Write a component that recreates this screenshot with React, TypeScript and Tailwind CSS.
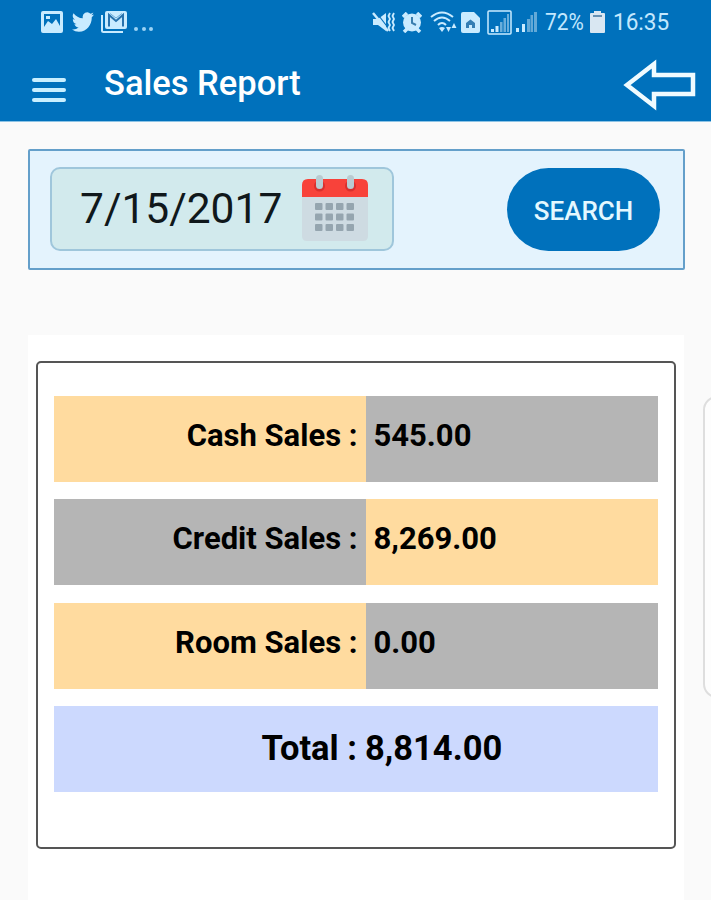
import React from "react";

const ICE = "#c9ebff";

function PictureIcon() {
  return (
    <svg width="22" height="22" viewBox="0 0 22 22">
      <path
        fill={ICE}
        fillRule="evenodd"
        d="M2 0h18a2 2 0 0 1 2 2v18a2 2 0 0 1-2 2H2a2 2 0 0 1-2-2V2a2 2 0 0 1 2-2zM3 3v13l4-6 4 3 4-5 4 7V3zM5 5h4v3H5z"
      />
    </svg>
  );
}

function BirdIcon() {
  return (
    <svg width="22" height="20" viewBox="0 2 24 20" preserveAspectRatio="none">
      <path
        fill={ICE}
        d="M23.95 4.57a10 10 0 0 1-2.82.77 4.96 4.96 0 0 0 2.16-2.72c-.95.55-2 .96-3.13 1.18a4.92 4.92 0 0 0-8.38 4.48C7.69 8.1 4.07 6.13 1.64 3.16a4.92 4.92 0 0 0 1.52 6.57 4.9 4.9 0 0 1-2.23-.61v.06a4.92 4.92 0 0 0 3.95 4.83 5 5 0 0 1-2.21.08 4.94 4.94 0 0 0 4.6 3.42A9.87 9.87 0 0 1 0 19.54a13.99 13.99 0 0 0 7.55 2.21c9.05 0 14-7.5 14-13.98 0-.21 0-.42-.02-.63a9.94 9.94 0 0 0 2.42-2.57z"
      />
    </svg>
  );
}

function MailIcon() {
  return (
    <svg width="26" height="22" viewBox="0 0 26 22" fill="none">
      <path d="M1 4v15.500a1.500 1.500 0 0 0 1.500 1.500H22" stroke={ICE} strokeWidth="2" />
      <rect x="4" y="0" width="22" height="18" rx="2" fill={ICE} />
      <path d="M8 15.500V4l7 6 7-6v11.500" stroke="#2872ad" strokeWidth="2" />
      <path d="M9 2.500l6 4.500 6-4.500" stroke="#6aacda" strokeWidth="1" />
    </svg>
  );
}

function MuteIcon() {
  return (
    <svg width="24" height="22" viewBox="0 0 24 22" fill="none">
      <path d="M1 8h5l8-6v18l-8-6H1z" fill={ICE} />
      <path d="M4 1l13 17" stroke="#0871bc" strokeWidth="1.200" />
      <path d="M1 2l15 18" stroke={ICE} strokeWidth="2.500" />
      <path d="M18 2l-1.500 3 1.500 3-1.500 3 1.500 3-1.500 3 1.500 3M22 2l-1.500 3 1.500 3-1.500 3 1.500 3-1.500 3 1.500 3" stroke={ICE} strokeWidth="1.800" />
    </svg>
  );
}

function AlarmIcon() {
  return (
    <svg width="20" height="21" viewBox="0 0 20 21" fill="none">
      <path d="M1 5l4-4M19 5l-4-4M2 20l4-4M18 20l-4-4" stroke={ICE} strokeWidth="3.500" />
      <circle cx="10" cy="10.500" r="9" fill={ICE} />
      <path d="M10 5v6l4 2" stroke="#397eae" strokeWidth="2" />
    </svg>
  );
}

function WifiIcon() {
  return (
    <svg width="28" height="22" viewBox="0 0 28 22" fill="none" stroke={ICE} strokeWidth="2">
      <path d="M1 6q11-9 22 0M4 10q8-7 16 0M8 14q4-4 8 0" />
      <path d="M9 17q3-2 6 0l-3 4z" fill={ICE} stroke="none" />
      <path d="M16 16h5l-2.500 5zM21.500 17l2.500-5 2.500 5z" fill={ICE} stroke="none" />
    </svg>
  );
}

function SimIcon() {
  return (
    <svg width="19" height="21" viewBox="0 0 19 21" fill="none">
      <path d="M2 0h11l6 6v13a2 2 0 0 1-2 2H2a2 2 0 0 1-2-2V2a2 2 0 0 1 2-2z" fill={ICE} />
      <path d="M5 16v-5l4.500-3.500L14 11v5h-3v-3H8v3z" fill="#347eb4" />
    </svg>
  );
}

function BoxedSignalIcon() {
  return (
    <svg width="25" height="25" viewBox="0 0 25 25" fill="none">
      <rect x="1" y="1" width="23" height="23" rx="1" stroke={ICE} strokeWidth="1.500" />
      <path d="M4 19h3v3H4zM8.500 16h3v6h-3z" fill={ICE} />
      <path d="M13 12h2.500v10H13zM16.500 8H19v14h-2.500zM20 4h2v18h-2z" fill="#69aedb" />
    </svg>
  );
}

function SignalIcon() {
  return (
    <svg width="21" height="20" viewBox="0 0 21 20">
      <path d="M0 16h3v4H0zM6 12h3v8H6z" fill={ICE} />
      <path d="M11 7h3v13h-3zM14.500 3h2.500v17h-2.500zM18 0h3v20h-3z" fill="#63a9d7" />
    </svg>
  );
}

function BatteryIcon() {
  return (
    <svg width="15" height="22" viewBox="0 0 15 22">
      <path d="M4 0h7v2h3a1 1 0 0 1 1 1v18a1 1 0 0 1-1 1H1a1 1 0 0 1-1-1V3a1 1 0 0 1 1-1h3z" fill="#d9e7f2" />
      <path d="M3 4h9v2H3z" fill="#6792b4" />
    </svg>
  );
}

function CalendarIcon() {
  const columns = [16, 26.5, 37, 47.5];
  const rows = [31, 41.5, 52];
  return (
    <svg className="ml-[16px] shrink-0" width="68" height="68" viewBox="0 0 68 68">
      <path d="M1 20h66v41q0 5-5 5H6q-5 0-5-5z" fill="#cedbe2" />
      <path d="M1 22V10q0-6 6-6h54q6 0 6 6v12z" fill="#f8423a" />
      <circle cx="18.500" cy="11" r="5.500" fill="#d92f2d" />
      <circle cx="49.500" cy="11" r="5.500" fill="#d92f2d" />
      <rect x="15" y="0" width="7" height="14" rx="3.500" fill="#b9cbd1" />
      <rect x="46" y="0" width="7" height="14" rx="3.500" fill="#b9cbd1" />
      {rows.map((y) =>
        columns.map((x) => (
          <rect key={`${x}-${y}`} x={x - 2} y={y - 3} width="7.500" height="7" rx="1" fill="#95a5af" />
        )),
      )}
    </svg>
  );
}

const sales = [
  { label: "Cash Sales :", value: "545.00", left: "bg-[#ffdb9f]", right: "bg-[#b5b5b5]" },
  { label: "Credit Sales :", value: "8,269.00", left: "bg-[#b5b5b5]", right: "bg-[#ffdb9f]" },
  { label: "Room Sales :", value: "0.00", left: "bg-[#ffdb9f]", right: "bg-[#b5b5b5]" },
];

export default function App() {
  return (
    <div className="relative flex h-[900px] w-[711px] flex-col overflow-hidden bg-[#fafafa] font-['Roboto',sans-serif] text-black">
      <header className="h-[122px] shrink-0 border-b border-[#8cc3e5] bg-[#0071bc]">
        <div className="flex h-[44px] items-center pl-[41px] pr-[41px] text-[24px] text-[#c3e8fe]">
          <PictureIcon />
          <span className="ml-[9px]"><BirdIcon /></span>
          <span className="ml-[7px]"><MailIcon /></span>
          <span className="ml-[7px] mt-[14px] flex gap-[3.5px]">
            <i className="size-[4px] rounded-full bg-[#9bd3f5]" />
            <i className="size-[4px] rounded-full bg-[#9bd3f5]" />
            <i className="size-[4px] rounded-full bg-[#9bd3f5]" />
          </span>
          <div className="ml-auto flex items-center">
            <MuteIcon />
            <span className="ml-[6px]"><AlarmIcon /></span>
            <span className="ml-[8px]"><WifiIcon /></span>
            <span className="ml-[3px]"><SimIcon /></span>
            <span className="ml-[7px]"><BoxedSignalIcon /></span>
            <span className="ml-[4px]"><SignalIcon /></span>
            <span className="ml-[8px] w-[45px]"><span className="inline-block origin-left scale-x-[.87]">72%</span></span>
            <BatteryIcon />
            <span className="ml-[8px] w-[57px] whitespace-nowrap"><span className="inline-block origin-left scale-x-[.94]">16:35</span></span>
          </div>
        </div>
        <div className="flex h-[77px] pl-[32px] pr-[15px]">
          <div className="mt-[34px] flex w-[34px] flex-col gap-[6px]">
            <i className="h-[4px] rounded-sm bg-[#c9efff]" />
            <i className="h-[4px] rounded-sm bg-[#c9efff]" />
            <i className="h-[4px] rounded-sm bg-[#c9efff]" />
          </div>
          <h1 className="ml-[38px] mt-[19px] whitespace-nowrap text-[34.5px] font-medium leading-[40px] text-white">Sales Report</h1>
          <svg className="ml-auto mt-[15px]" width="73" height="52" viewBox="0 0 73 52" fill="none">
            <path d="M4 26L31 5v11h39v19H31v12z" stroke="#f0fbff" strokeWidth="4.500" />
          </svg>
        </div>
      </header>

      <section className="ml-[28px] mt-[27px] flex h-[121px] w-[657px] shrink-0 items-start justify-between rounded-[2px] border-2 border-[#649fca] bg-[#e4f3fd] pl-[20px] pr-[23px] pt-[16px]">
        <div className="flex h-[84px] w-[344px] items-center rounded-[10px] border-2 border-[#9fc6db] bg-[#d2eaed] pl-[28px]">
          <span className="w-[205px] whitespace-nowrap text-[42.500px] text-[#10181b]">7/15/2017</span>
          <CalendarIcon />
        </div>
        <button className="mt-px h-[83px] w-[153px] rounded-full bg-[#0071bc] pt-[4px] text-[26px] font-medium text-[#e4f8ff]">SEARCH</button>
      </section>

      <main className="ml-[28px] mt-[65px] h-[565px] w-[656px] shrink-0 bg-white pl-[8px] pt-[26px]">
        <div className="flex h-[488px] w-[640px] flex-col gap-[17.3px] rounded-[5px] border-2 border-[#555] px-[16px] pt-[33px] text-[31px] font-bold">
          {sales.map((row) => (
            <div key={row.label} className="flex h-[86px] shrink-0">
              <div className={`w-[311.5px] pr-[8px] pt-[20px] text-right leading-[40px] ${row.left}`}>{row.label}</div>
              <div className={`flex-1 pl-[8px] pt-[20px] leading-[40px] ${row.right}`}>{row.value}</div>
            </div>
          ))}
          <div className="flex h-[86px] shrink-0 bg-[#ccd9fe] pt-[22px] text-[34.5px] leading-[40px]">
            <span className="w-[303px] text-right">Total :</span>
            <span className="ml-[8px]">8,814.00</span>
          </div>
        </div>
      </main>

      <div className="absolute -right-[20px] top-[396px] h-[302px] w-[28px] rounded-[14px] border-2 border-[#dedede] bg-[#fdfdfd]" />
    </div>
  );
}
